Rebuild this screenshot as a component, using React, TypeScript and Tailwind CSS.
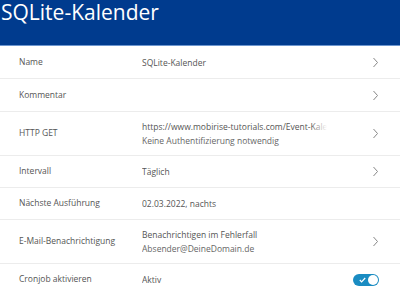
import React from "react";

const Chevron = () => (
  <svg width="7" height="11" viewBox="0 0 7 11" className="shrink-0">
    <polyline points="1.5,1 5.5,5.5 1.5,10" fill="none" stroke="#888" strokeWidth="1" />
  </svg>
);

const Toggle = () => (
  <div className="relative w-[26px] h-[12px] rounded-full bg-[#1a8cc2]">
    <svg width="7" height="6" viewBox="0 0 7 6" className="absolute left-[6px] top-[3px]">
      <polyline points="0.8,3 2.6,4.8 6.2,1" fill="none" stroke="#fff" strokeWidth="1.2" />
    </svg>
    <div className="absolute right-[1px] top-[1px] w-[10px] h-[10px] rounded-full bg-white" />
  </div>
);

type Row = {
  label: string;
  lines: string[];
  h: string;
  chevron?: boolean;
  toggle?: boolean;
  fade?: boolean;
};

const rows: Row[] = [
  { label: "Name", lines: ["SQLite-Kalender"], h: "h-[33px]", chevron: true },
  { label: "Kommentar", lines: [], h: "h-[33px]", chevron: true },
  {
    label: "HTTP GET",
    lines: ["https://www.mobirise-tutorials.com/Event-Kalender", "Keine Authentifizierung notwendig"],
    h: "h-[44px]",
    chevron: true,
    fade: true,
  },
  { label: "Intervall", lines: ["Täglich"], h: "h-[32px]", chevron: true },
  { label: "Nächste Ausführung", lines: ["02.03.2022, nachts"], h: "h-[32px]" },
  {
    label: "E-Mail-Benachrichtigung",
    lines: ["Benachrichtigen im Fehlerfall", "Absender@DeineDomain.de"],
    h: "h-[44px]",
    chevron: true,
  },
  { label: "Cronjob aktivieren", lines: ["Aktiv"], h: "h-[32px]", toggle: true },
];

export default function App() {
  return (
    <div
      className="w-[400px] h-[295px] overflow-hidden bg-white"
      style={{ fontFamily: '"Open Sans", sans-serif' }}
    >
      <div className="h-[46px] bg-[#003b8e] border-b border-[#6d96cf]">
        <div className="pl-[1px] pt-[0px] text-[21px] leading-[24px] text-white">
          SQLite-Kalender
        </div>
      </div>
      {rows.map((r, i) => (
        <div
          key={i}
          className={`${r.h} flex items-center border-b border-[#ececec] pl-[19px] pr-[21px] text-[8.5px] text-[#555]`}
        >
          <div className="w-[123px] shrink-0">{r.label}</div>
          <div className="w-[185px] shrink-0 flex flex-col gap-[3px] leading-[11px]">
            {r.lines.map((l, j) => (
              <div
                key={j}
                className={`relative whitespace-nowrap overflow-hidden ${j === 1 ? "text-[#666]" : ""}`}
              >
                {l}
                {r.fade && j === 0 && (
                  <div className="absolute right-0 top-0 h-full w-[16px] bg-gradient-to-r from-transparent to-white" />
                )}
              </div>
            ))}
          </div>
          <div className="flex-1 flex items-center justify-end">
            {r.chevron && <Chevron />}
            {r.toggle && <Toggle />}
          </div>
        </div>
      ))}
    </div>
  );
}
